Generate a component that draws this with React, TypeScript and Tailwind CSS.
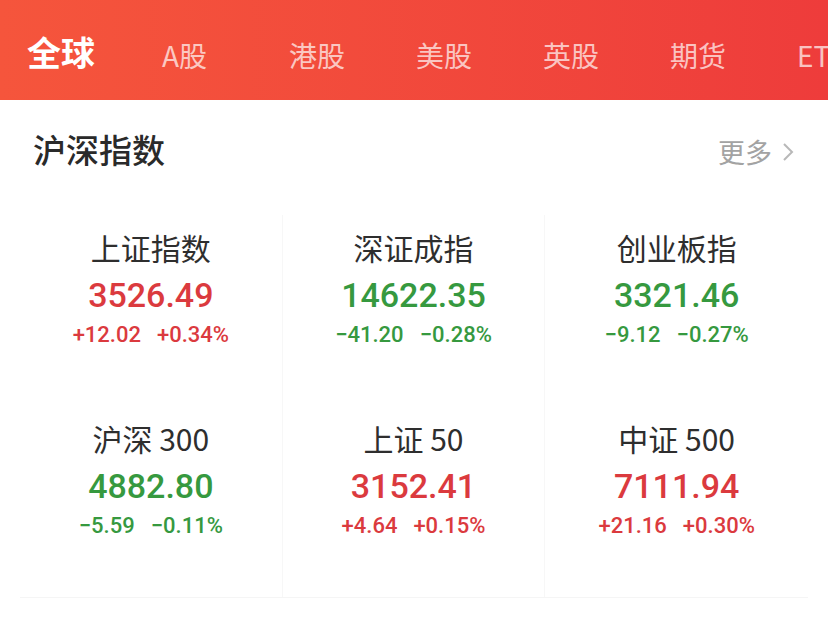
const tabs = ["A股", "港股", "美股", "英股", "期货", "ETF"];

type Idx = { name: string; value: string; change: string; pct: string; up: boolean };

const indices: Idx[] = [
  { name: "上证指数", value: "3526.49", change: "+12.02", pct: "+0.34%", up: true },
  { name: "深证成指", value: "14622.35", change: "−41.20", pct: "−0.28%", up: false },
  { name: "创业板指", value: "3321.46", change: "−9.12", pct: "−0.27%", up: false },
  { name: "沪深 300", value: "4882.80", change: "−5.59", pct: "−0.11%", up: false },
  { name: "上证 50", value: "3152.41", change: "+4.64", pct: "+0.15%", up: true },
  { name: "中证 500", value: "7111.94", change: "+21.16", pct: "+0.30%", up: true },
];

const cjk = { fontFamily: '"Noto Sans CJK SC", "Noto Sans", sans-serif' };
const num = { fontFamily: 'Roboto, "Noto Sans", sans-serif' };

function Cell({ item, col }: { item: Idx; col: number }) {
  const color = item.up ? "text-[#db3a3e]" : "text-[#36993f]";
  return (
    <div
      className={`flex flex-col items-center pt-[12px] h-[191px] ${
        col < 2 ? "border-r border-[#f7f7f7]" : ""
      }`}
    >
      <div className="text-[30px] leading-[40px] text-[#2e2e2e]" style={cjk}>
        {item.name}
      </div>
      <div className={`mt-[4px] text-[34px] leading-[48px] font-medium ${color}`} style={num}>
        {item.value}
      </div>
      <div
        className={`mt-[1px] flex gap-[16px] text-[22px] leading-[30px] font-medium ${color}`}
        style={num}
      >
        <span>{item.change}</span>
        <span>{item.pct}</span>
      </div>
    </div>
  );
}

export default function App() {
  return (
    <div className="w-[828px] h-[622px] overflow-hidden bg-white" style={cjk}>
      <div className="h-[100px] bg-gradient-to-r from-[#f5553c] to-[#ee3c3b] flex items-center pl-[27px] pt-[4px] whitespace-nowrap">
        <span className="text-[34px] font-bold text-white leading-none">全球</span>
        <div className="flex ml-[67px] gap-[72px] pt-[6px]">
          {tabs.map((t) => (
            <span key={t} className="text-[28px] text-white/70 leading-none w-[55px]">
              {t}
            </span>
          ))}
        </div>
      </div>
      <div className="flex items-center justify-between pl-[33px] pr-[33px] h-[100px]">
        <span className="text-[33px] font-medium text-[#2a2a2a]">沪深指数</span>
        <span className="flex items-center gap-[10px] text-[27px] text-[#a3a3a3] pt-[4px]">
          更多
          <svg width="13" height="22" viewBox="0 0 13 22" fill="none">
            <path d="M2 3 L10 11 L2 19" stroke="#b8b8b8" strokeWidth="2" />
          </svg>
        </span>
      </div>
      <div className="px-[20px] mt-[15px]">
        <div className="grid grid-cols-3 border-b border-[#f5f5f5]">
          {indices.map((it, i) => (
            <Cell key={it.name} item={it} col={i % 3} />
          ))}
        </div>
      </div>
    </div>
  );
}
